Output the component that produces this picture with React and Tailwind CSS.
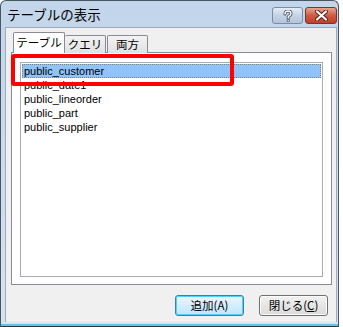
export default function App() {
  const jp = { fontFamily: '"Noto Sans CJK JP", "Noto Sans", sans-serif' };
  const items = ["public_customer", "public_date1", "public_lineorder", "public_part", "public_supplier"];
  return (
    <div className="w-[343px] h-[327px] bg-white relative overflow-hidden">
      <div className="w-[339px] h-[327px] rounded-t-[6px] border border-[#4a5563] border-b-0 bg-gradient-to-b from-[#c2d5ea] to-[#d6e3f1] flex flex-col">
        {/* title bar */}
        <div className="h-[26px] flex items-center pl-[6px] pr-[1px]">
          <div className="flex-1 text-[13.5px] text-black leading-none pt-[2px]" style={jp}>テーブルの表示</div>
          <div className="flex items-start self-start mt-[6px] gap-[2px]">
            <div className="w-[31px] h-[17px] rounded-[3px] border border-[#7a8ca5] bg-gradient-to-b from-[#e4ecf6] via-[#c4d3e6] to-[#b3c5dd] flex items-center justify-center">
              <svg width="10" height="12" viewBox="0 0 10 12">
                <path d="M2 4 Q2 1 5 1 Q8 1 8 3.5 Q8 5 6 6 L5.2 7 L5.2 8" fill="none" stroke="#3d4b5e" strokeWidth="3" strokeLinecap="round" />
                <path d="M2 4 Q2 1 5 1 Q8 1 8 3.5 Q8 5 6 6 L5.2 7 L5.2 8" fill="none" stroke="#ffffff" strokeWidth="1.4" strokeLinecap="round" />
                <rect x="3.8" y="9.3" width="2.8" height="2.5" fill="#3d4b5e" />
                <rect x="4.5" y="9.9" width="1.4" height="1.3" fill="#ffffff" />
              </svg>
            </div>
            <div className="w-[32px] h-[17px] rounded-[3px] border border-[#7b3428] bg-gradient-to-b from-[#e8a493] via-[#cf5a43] to-[#c13f28] flex items-center justify-center">
              <svg width="13" height="11" viewBox="0 0 13 11">
                <path d="M2 1.5 L11 9.5 M11 1.5 L2 9.5" stroke="#5a1f17" strokeWidth="4" strokeLinecap="round" />
                <path d="M2 1.5 L11 9.5 M11 1.5 L2 9.5" stroke="#ffffff" strokeWidth="2.2" strokeLinecap="round" />
              </svg>
            </div>
          </div>
        </div>
        {/* client area */}
        <div className="flex-1 ml-[4px] mr-[1px] bg-[#f0f0f0] border border-[#9aabc2] border-b-0 flex flex-col pl-[5px] pr-[4px] pt-[4px]">
          {/* tabs */}
          <div className="flex items-end h-[21px] pl-[2px] relative z-10">
            <div className="w-[52px] h-[21px] bg-white border border-[#898c95] border-b-0 rounded-t-[2px] flex items-center justify-center text-[11.5px] text-black leading-none" style={jp}>テーブル</div>
            <div className="w-[41px] h-[18px] bg-gradient-to-b from-[#f3f3f3] to-[#e1e1e1] border border-[#898c95] border-b-0 border-l-0 rounded-t-[2px] flex items-center justify-center text-[11.5px] text-black leading-none" style={jp}>クエリ</div>
            <div className="w-[41px] h-[18px] ml-[1px] bg-gradient-to-b from-[#f3f3f3] to-[#e1e1e1] border border-[#898c95] border-b-0 rounded-t-[2px] flex items-center justify-center text-[11.5px] text-black leading-none" style={jp}>両方</div>
          </div>
          {/* panel */}
          <div className="h-[233px] -mt-[1px] bg-white border border-[#898c95] pt-[9px] pl-[8px] pr-[8px]">
            <div className="h-[215px] bg-white border border-[#a8adb5] pt-[1px] px-[1px]" style={{ fontFamily: '"Liberation Sans", Arial, sans-serif' }}>
              {items.map((it, i) => (
                <div
                  key={it}
                  className={
                    i === 0
                      ? "h-[14px] bg-[#8fc3f9] border border-dotted border-[#8b7d6b] pl-[1px] text-[11px] leading-[12px] text-black"
                      : "h-[14px] pl-[2px] text-[11px] leading-[14px] text-black"
                  }
                >
                  {it}
                </div>
              ))}
            </div>
          </div>
          {/* buttons */}
          <div className="flex justify-end gap-[15px] pr-[4px] mt-[10px]">
            <div className="w-[69px] h-[21px] rounded-[3px] border border-[#3c7fb1] bg-gradient-to-b from-[#eaf6fd] to-[#bee6fd] shadow-[inset_0_0_0_1px_#48d4fc] flex items-center justify-center text-[11.5px] text-black leading-none" style={jp}>追加(A)</div>
            <div className="w-[69px] h-[21px] rounded-[3px] border border-[#707070] bg-gradient-to-b from-[#f2f2f2] to-[#dadada] shadow-[inset_0_0_0_1px_#fcfcfc] flex items-center justify-center text-[11.5px] text-black leading-none" style={jp}>
              閉じる(<span className="underline">C</span>)
            </div>
          </div>
          <div className="flex-1" />
        </div>
        <div className="h-[2px] bg-[#d6e3f1]" />
        <div className="h-[2px] bg-[#5fc6e6]" />
        <div className="h-[1px] bg-[#2c3340]" />
      </div>
      {/* red highlight */}
      <div className="absolute left-[11px] top-[54px] w-[223px] h-[32px] border-[4px] border-[#ff0000] rounded-[3px]" />
    </div>
  );
}
